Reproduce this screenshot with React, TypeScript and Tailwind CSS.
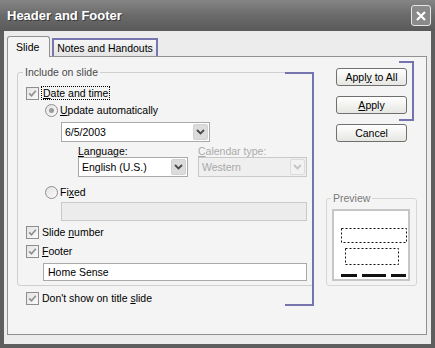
import type { ReactNode } from 'react'

const font = { fontFamily: '"Liberation Sans", Arial, sans-serif' }

function CheckBox() {
  return (
    <span className="w-[13px] h-[13px] border border-[#8e8e8e] bg-gradient-to-br from-[#e4e4e4] to-[#fafafa] flex items-center justify-center shrink-0">
      <svg width="11" height="11" viewBox="0 0 11 11">
        <path d="M2.2 5.4 L4.5 7.8 L8.8 2.8" fill="none" stroke="#8f8f8f" strokeWidth="1.7" />
      </svg>
    </span>
  )
}

function Radio({ on }: { on?: boolean }) {
  return (
    <span className="w-[13px] h-[13px] rounded-full border border-[#8e8e8e] bg-gradient-to-br from-[#e2e2e2] to-[#fbfbfb] flex items-center justify-center shrink-0">
      {on && <span className="w-[5px] h-[5px] rounded-full bg-[#9a9a9a]" />}
    </span>
  )
}

function Chevron({ color }: { color: string }) {
  return (
    <svg width="9" height="6" viewBox="0 0 9 6">
      <path d="M1 1 L4.5 4.5 L8 1" fill="none" stroke={color} strokeWidth="1.8" />
    </svg>
  )
}

function Combo({ value, className, disabled }: { value: string; className: string; disabled?: boolean }) {
  return (
    <div
      className={
        'flex items-center h-[20px] border ' +
        (disabled ? 'border-[#c9c9c9] bg-[#efefef] text-[#a8a8a8] ' : 'border-[#a9a9a9] bg-white text-black ') +
        className
      }
    >
      <span className="flex-1 pl-[3px]">{value}</span>
      <span
        className={
          'w-[15px] h-[16px] mr-[1px] rounded-[2px] flex items-center justify-center ' +
          (disabled ? 'bg-[#f2f2f2] border border-[#dcdcdc]' : 'bg-[#dcdcdc] border border-[#d2d2d2]')
        }
      >
        <Chevron color={disabled ? '#c4c4c4' : '#4a4a4a'} />
      </span>
    </div>
  )
}

function Row({ children, className }: { children: ReactNode; className: string }) {
  return <div className={'flex items-center h-[14px] ' + className}>{children}</div>
}

function Button({ children }: { children: ReactNode }) {
  return (
    <div className="w-[71px] h-[18px] rounded-[3px] border border-[#6f6f6f] bg-gradient-to-b from-[#ffffff] to-[#e6e6e2] flex items-center justify-center text-black">
      <span>{children}</span>
    </div>
  )
}

export default function App() {
  return (
    <div className="w-[435px] h-[348px] bg-[#5e5e5e] flex flex-col text-[10.5px] leading-none" style={font}>
      {/* title bar */}
      <div className="h-[31px] shrink-0 flex items-center justify-between pl-[7px] pr-[4px] bg-gradient-to-b from-[#858585] via-[#6a6a6a] to-[#5a5a5a]">
        <span className="text-white font-bold text-[13px] [text-shadow:1px_1px_0_#3a3a3a]">Header and Footer</span>
        <span className="w-[20px] h-[21px] rounded-[3px] border border-[#e6e6e6] bg-[#8a8a8a] flex items-center justify-center">
          <svg width="12" height="12" viewBox="0 0 12 12">
            <path d="M2 2 L10 10 M10 2 L2 10" stroke="white" strokeWidth="2.2" />
          </svg>
        </span>
      </div>

      {/* body */}
      <div className="flex-1 mx-[4px] mb-[4px] bg-[#ececec] pl-[3px] pt-[5px]">
        {/* tabs */}
        <div className="flex items-end h-[20px]">
          <div className="relative z-10 -mb-px w-[43px] h-[21px] bg-[#f4f4f4] border border-b-0 border-[#919191] rounded-t-[3px] pl-[8px] pt-[5px] text-black">
            Slide
          </div>
          <div className="ml-[2px] w-[106px] h-[18px] border-2 border-b-0 border-[#7876b0] bg-gradient-to-b from-[#f6f6f6] to-[#e4e4e4] flex items-center justify-center text-black">
            Notes and Handouts
          </div>
        </div>

        {/* panel */}
        <div className="relative w-[420px] h-[279px] border border-[#919191] bg-[#f4f4f4] flex pl-[9px]">
          {/* left column */}
          <div className="w-[297px] mt-[15px] flex flex-col">
            <div className="relative h-[214px] border border-[#cfcfcf] rounded-[3px] flex flex-col">
              <span className="absolute left-[5px] -top-[6px] px-[2px] bg-[#f4f4f4] text-[#4a4a4a]">Include on slide</span>

              <Row className="mt-[13px] pl-[8px]">
                <CheckBox />
                <span className="ml-[2px] px-[1px] py-[1px] border border-dotted border-black text-black">
                  <span className="underline">D</span>ate and time
                </span>
              </Row>
              <Row className="mt-[3px] pl-[27px]">
                <Radio on />
                <span className="ml-[2px] text-black">
                  <span className="underline">U</span>pdate automatically
                </span>
              </Row>
              <Combo value="6/5/2003" className="mt-[5px] ml-[43px] w-[149px]" />
              <div className="mt-[3px] h-[12px] flex items-center">
                <span className="ml-[60px] w-[120px] text-black">
                  <span className="underline">L</span>anguage:
                </span>
                <span className="text-[#ababab]">
                  <span className="underline">C</span>alendar type:
                </span>
              </div>
              <div className="flex">
                <Combo value="English (U.S.)" className="ml-[60px] w-[110px]" />
                <Combo value="Western" className="ml-[10px] w-[109px]" disabled />
              </div>
              <Row className="mt-[8px] pl-[27px]">
                <Radio />
                <span className="ml-[2px] text-black">
                  Fi<span className="underline">x</span>ed
                </span>
              </Row>
              <div className="mt-[3px] ml-[43px] w-[246px] h-[19px] border border-[#c9c9c9] bg-[#ececec]" />
              <Row className="mt-[4px] pl-[8px]">
                <CheckBox />
                <span className="ml-[3px] text-black">
                  Slide <span className="underline">n</span>umber
                </span>
              </Row>
              <Row className="mt-[5px] pl-[8px]">
                <CheckBox />
                <span className="ml-[3px] text-black">
                  <span className="underline">F</span>ooter
                </span>
              </Row>
              <div className="mt-[5px] ml-[25px] w-[264px] h-[18px] border border-[#a9a9a9] bg-white flex items-center pl-[4px] text-black">
                Home Sense
              </div>
            </div>
            <Row className="mt-[5px] pl-[9px]">
              <CheckBox />
              <span className="ml-[3px] text-black">
                Don't show on title <span className="underline">s</span>lide
              </span>
            </Row>
          </div>

          {/* right column */}
          <div className="ml-[12px] w-[91px] mt-[11px] flex flex-col items-center">
            <div className="flex flex-col gap-[10px]">
              <Button>
                Appl<span className="underline">y</span> to All
              </Button>
              <Button>
                <span className="underline">A</span>pply
              </Button>
              <Button>Cancel</Button>
            </div>
            <div className="relative mt-[56px] w-[91px] h-[88px] border border-[#d6d6d6] rounded-[3px] pl-[5px] pt-[10px]">
              <span className="absolute left-[4px] -top-[6px] px-[2px] bg-[#f4f4f4] text-[#7a7a7a]">Preview</span>
              <div className="w-[78px] h-[72px] border-2 border-[#c6c6c6] bg-white">
                <svg width="74" height="68" viewBox="0 0 74 68">
                  <rect x="7.5" y="17.5" width="65" height="14" fill="none" stroke="#111" strokeWidth="1" strokeDasharray="2 2" />
                  <rect x="11.5" y="37.5" width="53" height="16" fill="none" stroke="#111" strokeWidth="1" strokeDasharray="2 2" />
                  <rect x="7" y="63" width="16" height="3" fill="#111" />
                  <rect x="28" y="63" width="24" height="3" fill="#111" />
                  <rect x="57" y="63" width="15" height="3" fill="#111" />
                </svg>
              </div>
            </div>
          </div>

          {/* annotation brackets */}
          <div className="absolute left-[277px] top-[15px] w-[29px] h-[234px] border-2 border-l-0 border-[#7674ae]" />
          <div className="absolute left-[391px] top-[4px] w-[15px] h-[60px] border-2 border-l-0 border-[#7674ae]" />
        </div>
      </div>
    </div>
  )
}
